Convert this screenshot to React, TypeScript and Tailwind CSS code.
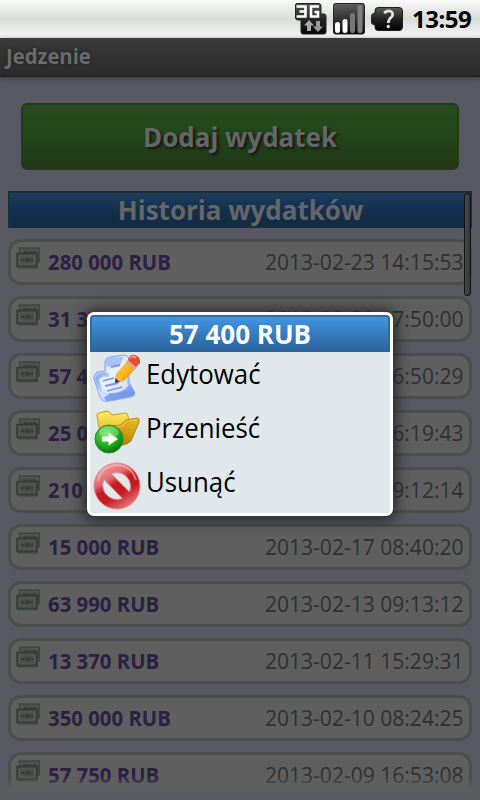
const rows: [string, string][] = [
  ['280 000 RUB', '2013-02-23 14:15:53'],
  ['31 370 RUB', '2013-02-22 17:50:00'],
  ['57 400 RUB', '2013-02-21 16:50:29'],
  ['25 000 RUB', '2013-02-20 16:19:43'],
  ['210 000 RUB', '2013-02-18 19:12:14'],
  ['15 000 RUB', '2013-02-17 08:40:20'],
  ['63 990 RUB', '2013-02-13 09:13:12'],
  ['13 370 RUB', '2013-02-11 15:29:31'],
  ['350 000 RUB', '2013-02-10 08:24:25'],
  ['57 750 RUB', '2013-02-09 16:53:08'],
];

function NetworkIcon() {
  return (
    <svg width="34" height="34" viewBox="0 0 34 34" className="block">
      <defs>
        <linearGradient id="net" x1="0" y1="0" x2="0" y2="1">
          <stop offset="0" stopColor="#555" />
          <stop offset="0.55" stopColor="#222" />
          <stop offset="1" stopColor="#050505" />
        </linearGradient>
      </defs>
      <path d="M3 1.500H25Q27 1.500 27 4V12H30Q32 12 32 14V30Q32 32 30 32H9Q7 32 7 30V18H4Q1.500 18 1.500 16V3Q1.500 1.500 3 1.500Z" fill="url(#net)" stroke="#222" />
      <path d="M2.500 4.500H11.500V14.500H2.500M5.500 9.500H11.500M25 4.500H17V14.500H24V10H20.500" fill="none" stroke="#fff" strokeWidth="2.600" />
      <path d="M15 18L20 23.500H17V29H13V23.500H10Z" fill="#aaa" />
      <path d="M24 30L19 24.500H22V19H26V24.500H29Z" fill="#999" />
    </svg>
  );
}

function SignalIcon() {
  return (
    <svg width="34" height="34" viewBox="0 0 34 34" className="block">
      <defs>
        <linearGradient id="sig" x1="0" y1="0" x2="0" y2="1">
          <stop offset="0" stopColor="#5c5c5c" />
          <stop offset="0.5" stopColor="#333" />
          <stop offset="1" stopColor="#050505" />
        </linearGradient>
      </defs>
      <rect x="1.500" y="1.500" width="31" height="30.500" rx="2" fill="url(#sig)" stroke="#222" />
      <rect x="3" y="20" width="5" height="11" rx="2.500" fill="#fff" />
      <rect x="10.500" y="17" width="5" height="14" rx="2.500" fill="#fff" />
      <rect x="18" y="11" width="5" height="20" rx="2.500" fill="#777" />
      <rect x="25.500" y="3" width="5" height="28" rx="2.500" fill="#808080" />
    </svg>
  );
}

function BatteryIcon() {
  return (
    <svg width="34" height="26" viewBox="0 0 34 26" className="block">
      <defs>
        <linearGradient id="bat" x1="0" y1="0" x2="0" y2="1">
          <stop offset="0" stopColor="#5a5a5a" />
          <stop offset="0.500" stopColor="#222" />
          <stop offset="1" stopColor="#000" />
        </linearGradient>
      </defs>
      <path d="M8 1.500H29Q32.500 1.500 32.500 5V21Q32.500 24.500 29 24.500H8Q5 24.500 5 21V18.500H4Q1.500 18.500 1.500 16V10.500Q1.500 7.500 4 7.500H5V5Q5 1.500 8 1.500Z" fill="url(#bat)" stroke="#1d1d1d" />
      <path d="M14 7Q17 4.500 20 5Q24 6.500 22 10.500Q18.500 13 18.300 17" fill="none" stroke="#e8e4d6" strokeWidth="2.700" />
      <circle cx="18.300" cy="20.500" r="1.700" fill="#e8e4d6" />
    </svg>
  );
}

function MoneyIcon() {
  return (
    <svg width="24" height="22" viewBox="0 0 24 22" className="block shrink-0">
      <rect x="3.500" y="1" width="20" height="14" fill="#4b4e4b" stroke="#3d463e" strokeWidth="1.300" />
      <rect x="5.500" y="3" width="16" height="10" fill="#454845" stroke="#565956" />
      <path d="M8 5.500H11M13 5.500H15M17 5.500H20M21.500 6V13" stroke="#353936" strokeWidth="1.300" />
      <rect x="1" y="6.500" width="20" height="13" fill="#4a4d4a" stroke="#343d36" strokeWidth="1.500" />
      <rect x="3.500" y="9" width="15" height="8" fill="#4a4d4a" stroke="#585b58" />
      <path d="M5 13H8.500M14 13H17M10.500 11V15M12.500 11V15" stroke="#343835" strokeWidth="1.300" />
      <path d="M2 20.800H22" stroke="#414341" strokeWidth="1.300" />
    </svg>
  );
}

function EditIcon() {
  return (
    <svg width="48" height="48" viewBox="0 0 48 48" className="block shrink-0">
      <defs>
        <linearGradient id="paper" x1="0" y1="0" x2="1" y2="1">
          <stop offset="0" stopColor="#86aaf0" />
          <stop offset="0.45" stopColor="#e4edff" />
          <stop offset="1" stopColor="#7095ec" />
        </linearGradient>
        <linearGradient id="fold" x1="0" y1="0" x2="1" y2="1">
          <stop offset="0" stopColor="#6891ea" />
          <stop offset="1" stopColor="#c4d8ff" />
        </linearGradient>
        <linearGradient id="pencil" x1="0" y1="0" x2="1" y2="1">
          <stop offset="0" stopColor="#ffd54a" />
          <stop offset="0.500" stopColor="#f9b51b" />
          <stop offset="1" stopColor="#d97b08" />
        </linearGradient>
      </defs>
      <path d="M12 7Q13 4 17 3L31 1Q35 1 36 5L36 28L42 39Q42 42 38 43L14 47.500Q9 47.500 7 43L1 25Q0 21 4 18L12 17Z" fill="url(#paper)" stroke="#88a7e9" strokeWidth="1" />
      <path d="M14 7L31 4L34 28L37 36L15 41L5 24L13 21Z" fill="#f0f5ff" opacity="0.650" />
      <path d="M13 8Q14 5 18 4L31 3Q28 6 28 10L15 13Z" fill="#a8c3fa" />
      <path d="M2 25Q3 19 13 18Q17 19 16 23Q9 21 6 26L10 40Q5 38 2 25Z" fill="url(#fold)" opacity="0.700" />
      <path d="M16 39Q29 40 36 31L42 39Q38 43 14 47Q12 46 11 43Q14 43 16 39Z" fill="#6288e7" opacity="0.650" />
      <path d="M18 13L27 11M10 27L21 24M12 32L25 29M14 37L29 33" stroke="#7896e4" strokeWidth="1.800" />
      <path d="M35 6L44 13L31 27L22 29L23 20Z" fill="url(#pencil)" />
      <path d="M23 20L31 27L22 29Z" fill="#f3b55e" />
      <path d="M22.500 24L27 28L22 29Z" fill="#3b3852" />
      <path d="M33 8L36 5L44 12L41 16Z" fill="#dca5a0" />
      <path d="M35 6Q36 0 42 1Q48 3 47 9L43 13Z" fill="#f04a2c" />
      <path d="M37 4Q40 1 43 4" stroke="#ff9277" strokeWidth="2" fill="none" />
    </svg>
  );
}

function MoveIcon() {
  return (
    <svg width="48" height="48" viewBox="0 0 48 48" className="block shrink-0">
      <defs>
        <linearGradient id="back" x1="0" y1="0" x2="0" y2="1">
          <stop offset="0" stopColor="#fff060" />
          <stop offset="1" stopColor="#dca010" />
        </linearGradient>
        <linearGradient id="front" x1="0.800" y1="0" x2="0.300" y2="1">
          <stop offset="0" stopColor="#e7b820" />
          <stop offset="0.500" stopColor="#cf9b13" />
          <stop offset="1" stopColor="#a87006" />
        </linearGradient>
        <radialGradient id="green" cx="0.400" cy="0.300" r="0.700">
          <stop offset="0" stopColor="#73e869" />
          <stop offset="0.600" stopColor="#25ad29" />
          <stop offset="1" stopColor="#087910" />
        </radialGradient>
      </defs>
      <path d="M4 7Q4 5 6 5L15 3L19 7L32 5Q35 5 35 8L36 13L33 31L12 32Q6 26 4 7Z" fill="url(#back)" stroke="#c99a20" />
      <path d="M14 19L28 17L33 12L44 10Q47 10 46 14L38 33Q36 36 26 38L14 37Z" fill="url(#front)" stroke="#b9860e" />
      <path d="M15 20L29 18L34 13L44 12" fill="none" stroke="#f1d052" strokeWidth="1.200" />
      <circle cx="16" cy="31" r="14" fill="url(#green)" stroke="#2b8b2f" />
      <ellipse cx="16" cy="24" rx="10" ry="6" fill="#a7f19b" opacity="0.400" />
      <path d="M9 28.500H15.500V24.500L25 31L15.500 37.500V33.500H9Z" fill="#f5fff0" />
    </svg>
  );
}

function DeleteIcon() {
  return (
    <svg width="48" height="48" viewBox="0 0 48 48" className="block shrink-0">
      <defs>
        <linearGradient id="ban" x1="0.100" y1="0" x2="0.700" y2="1">
          <stop offset="0" stopColor="#f5aaaa" />
          <stop offset="0.350" stopColor="#e26a6d" />
          <stop offset="0.500" stopColor="#c51c24" />
          <stop offset="0.700" stopColor="#c51c24" />
          <stop offset="1" stopColor="#ed7b80" />
        </linearGradient>
      </defs>
      <path fillRule="evenodd" d="M24 1A23 23 0 1 0 24 47A23 23 0 1 0 24 1ZM18 11.500Q30 8 36 18Q39 24 36.500 30ZM11 17.500L29.500 36.500Q19 40 12 31Q8 24 11 17.500Z" fill="url(#ban)" stroke="#e28b8d" strokeWidth="1" />
      <path d="M5 19Q8 4 24 3Q39 4 43 18" fill="none" stroke="#fac7c7" strokeWidth="2" opacity="0.550" />
    </svg>
  );
}

function MenuItem({ icon, label }: { icon: React.ReactNode; label: string }) {
  return (
    <li className="flex h-[54px] items-start pl-[3px] pt-[2px]">
      {icon}
      <span className="ml-[5px] mt-[1px] origin-left scale-x-[0.922] text-[28px] leading-[36px] whitespace-nowrap text-black">{label}</span>
    </li>
  );
}

export default function App() {
  return (
    <div className="relative flex h-[800px] w-[480px] flex-col overflow-hidden bg-[#575861] font-['Open_Sans','Noto_Sans',sans-serif]">
      <header className="flex h-[38px] shrink-0 items-start justify-end bg-linear-to-b from-[#f8faf7] via-[#dadcda] to-[#f5f7f4]">
        <div className="mt-[2px] mr-[4px]"><NetworkIcon /></div>
        <div className="mt-[2px] mr-[4px]"><SignalIcon /></div>
        <div className="mt-[6px] mr-[8px]"><BatteryIcon /></div>
        <time className="mr-[9px] w-[59px] text-[24px] leading-[37px] font-bold tracking-[-0.500px] text-black">13:59</time>
      </header>
      <div className="flex h-[39px] shrink-0 items-start border-b border-[#202024] bg-linear-to-b from-[#3a3a3a] to-[#2b2b2b] pl-[6px] shadow-[0_2px_5px_#3c3f43]">
        <h1 className="origin-left scale-x-[0.965] text-[21px] leading-[36px] font-bold text-[#6b6b6b] [text-shadow:0_0_4px_#202020]">Jedzenie</h1>
      </div>

      <main className="flex h-[715px] shrink-0 flex-col overflow-hidden px-[8px]">
        <button className="mx-[13px] mt-[26px] h-[67px] shrink-0 rounded-[6px] border-2 border-[#213d15] bg-linear-to-b from-[#29491f] via-[#21481a] via-40% to-[#223718] pt-[2px] text-[26px] font-bold text-[#666] [text-shadow:2px_2px_3px_#151515]">
          Dodaj wydatek
        </button>
        <h2 className="mt-[21px] h-[37px] shrink-0 border-2 border-[#18303f] bg-linear-to-b from-[#1c3d5d] via-[#13304f] to-[#142a40] pl-[1px] text-center text-[26px] leading-[35px] font-bold text-[#666]">
          Historia wydatków
        </h2>
        <ul className="mt-[11px] flex flex-col gap-[11px]">
          {rows.map(([amount, date]) => (
            <li key={date} className="flex h-[46px] shrink-0 rounded-[13px] border-3 border-[#4c4d4c] bg-[#5f5f5f] pl-[5px]">
              <div className="mt-[5px]"><MoneyIcon /></div>
              <span className="ml-[8px] origin-left scale-x-[0.925] text-[22px] leading-[39px] font-bold whitespace-nowrap text-[#2c2044]">{amount}</span>
              <span className="mr-[5px] ml-auto origin-right scale-x-[0.957] text-[22px] leading-[39px] whitespace-nowrap text-[#303030]">{date}</span>
            </li>
          ))}
        </ul>
      </main>

      <div className="absolute top-[776px] left-[8px] h-[16px] w-[464px] bg-linear-to-b from-transparent to-[#5f5f5f] to-90%" />
      <div className="absolute top-[193px] left-[464px] h-[103px] w-[7px] rounded-[3px] border border-[#111] bg-linear-to-r from-[#4a4a4a] to-[#343434]" />

      <section role="dialog" className="absolute top-[312px] left-[87px] h-[204px] w-[306px] rounded-[7px] border-3 border-white bg-[#e0e8eb] shadow-[0_1px_14px_3px_#242424]">
        <h3 className="h-[37px] rounded-t-[4px] border-x-2 border-t-2 border-[#2c6ca6] bg-linear-to-b from-[#4196e2] to-[#2b619a] text-center text-[26px] leading-[35px] font-bold text-white">57 400 RUB</h3>
        <ul>
          <MenuItem icon={<EditIcon />} label="Edytować" />
          <MenuItem icon={<MoveIcon />} label="Przenieść" />
          <MenuItem icon={<DeleteIcon />} label="Usunąć" />
        </ul>
      </section>
    </div>
  );
}
